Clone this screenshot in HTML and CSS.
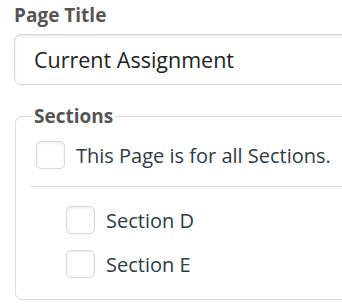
FILE: index.html
```html
<!DOCTYPE html>
<html lang="en">
<head>
    <meta charset="UTF-8">
    <title>Page Settings</title>
    <link rel="stylesheet" href="styles.css">
</head>
<body>
    <div class="form">
        <label class="field-label" for="title">Page Title</label>
        <input class="text-input" id="title" type="text" value="Current Assignment">

        <fieldset class="sections">
            <legend>Sections</legend>
            <label class="check-row">
                <span class="box"></span>
                <span>This Page is for all Sections.</span>
            </label>
            <div class="divider"></div>
            <div class="section-list">
                <label class="check-row">
                    <span class="box"></span>
                    <span>Section D</span>
                </label>
                <label class="check-row">
                    <span class="box"></span>
                    <span>Section E</span>
                </label>
            </div>
        </fieldset>
    </div>
</body>
</html>
```
FILE: styles.css
```css
html, body {
    margin: 0;
    padding: 0;
    background: #fff;
    overflow: hidden;
}

body {
    font-family: "Open Sans", "Liberation Sans", sans-serif;
    color: #2d3b45;
}

.form {
    width: 420px;
    padding: 2px 0 0 14px;
}

.field-label {
    display: block;
    font-size: 19px;
    font-weight: 700;
    color: #555;
    line-height: 26px;
    margin-bottom: 6px;
}

.text-input {
    display: block;
    box-sizing: border-box;
    width: 100%;
    height: 51px;
    padding: 0 19px;
    font-family: inherit;
    font-size: 21.5px;
    color: #222;
    border: 1px solid #d6d6d6;
    border-radius: 7px;
    box-shadow: inset 0 2px 3px rgba(0, 0, 0, 0.07);
    outline: none;
}

.sections {
    margin: 18px 0 0 1px;
    padding: 0 0 21px 14px;
    border: 1px solid #dcdcdc;
    border-radius: 7px;
}

.sections legend {
    padding: 0 2px;
    margin-left: 2px;
    font-size: 19px;
    font-weight: 700;
    color: #555;
    line-height: 26px;
}

.check-row {
    display: flex;
    align-items: center;
    gap: 11px;
    font-size: 20px;
    color: #2d3b45;
    height: 28px;
}

.box {
    box-sizing: border-box;
    width: 29px;
    height: 28px;
    border: 1px solid #d9d9d9;
    border-radius: 5px;
    box-shadow: inset 0 1px 3px rgba(0, 0, 0, 0.08);
    background: #fff;
}

.check-row:first-of-type {
    margin-top: 12px;
    margin-left: 6px;
}

.divider {
    border-top: 1px solid #e2e2e2;
    margin: 17px 0 19px 0;
}

.section-list {
    display: flex;
    flex-direction: column;
    gap: 16px;
    padding-left: 36px;
}

.section-list .check-row {
    margin: 0;
}
```
